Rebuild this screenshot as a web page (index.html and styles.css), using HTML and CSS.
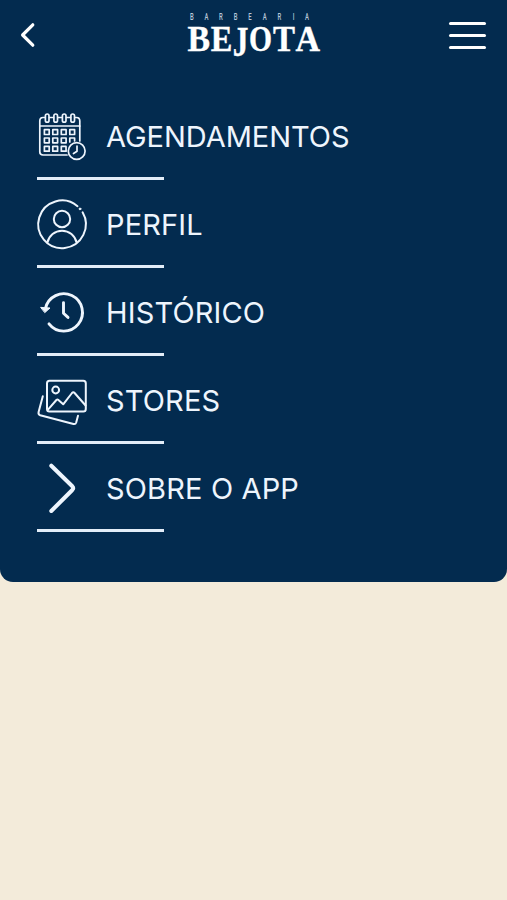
FILE: index.html
```
<!DOCTYPE html>
<html lang="pt-BR">
    <head>
        <meta charset="utf-8">
        <title>Barbearia Bejota</title>
        <link rel="stylesheet" href="styles.css">
    </head>
    <body>
        <div class="panel">
            <header class="topbar">
                <svg class="back" viewBox="0 0 16 26" width="16" height="26">
                    <path d="M12.8 2.8 L2.6 13 L12.8 23.2"/>
                </svg>
                <svg class="logo" viewBox="0 0 136 48" width="136" height="48">
                    <text class="logo-small" transform="scale(0.7 1)" x="7 28 48.5 69.5 90.5 111 132 154 171.5" y="9">BARBEARIA</text>
                    <g class="logo-name">
                        <text x="2.5" y="40" textLength="22.5" lengthAdjust="spacingAndGlyphs">B</text>
                        <text x="25.8" y="40" textLength="21.6" lengthAdjust="spacingAndGlyphs">E</text>
                        <text class="logo-j" x="47.8" y="44.5" textLength="15.6" lengthAdjust="spacingAndGlyphs">J</text>
                        <text x="64" y="40" textLength="23" lengthAdjust="spacingAndGlyphs">O</text>
                        <text x="88" y="40" textLength="22" lengthAdjust="spacingAndGlyphs">T</text>
                        <text x="110.4" y="40" textLength="24.5" lengthAdjust="spacingAndGlyphs">A</text>
                    </g>
                </svg>
                <div class="burger">
                    <span></span>
                    <span></span>
                    <span></span>
                </div>
            </header>
            <nav class="menu">
                <a class="item">
                    <svg class="icon" viewBox="0 0 50 50">
                        <!-- calendar, left open where the clock sits -->
                        <path d="M30 44 H6 Q2.8 44 2.8 41 V10 Q2.8 6.5 6 6.5 H8 M12.5 6.5 H16.5 M21 6.5 H25 M29.5 6.5 H33.5 M38 6.5 H39.5 Q42.8 6.5 42.8 10 V30"/>
                        <path d="M2.8 15 H42.8"/>
                        <rect x="8.4" y="3" width="3.6" height="8.2" rx="1.8"/>
                        <rect x="16.9" y="3" width="3.6" height="8.2" rx="1.8"/>
                        <rect x="25.4" y="3" width="3.6" height="8.2" rx="1.8"/>
                        <rect x="33.9" y="3" width="3.6" height="8.2" rx="1.8"/>
                        <path d="M7.4 18.7h4.8v4.8h-4.8z M15.8 18.7h4.8v4.8h-4.8z M24.3 18.7h4.8v4.8h-4.8z M32.8 18.7h4.8v4.8h-4.8z"/>
                        <path d="M7.4 27h4.8v4.8h-4.8z M15.8 27h4.8v4.8h-4.8z M24.3 27h4.8v4.8h-4.8z M32.8 31v-4h4.8v3"/>
                        <path d="M7.4 35.4h4.8v4.8h-4.8z M15.8 35.4h4.8v4.8h-4.8z M29 35.4h-4.7v4.8h4.8z"/>
                        <circle cx="39.7" cy="40" r="8.4"/>
                        <path d="M40 35 V40.3 L36.5 42.5"/>
                    </svg>
                    <span class="label label-wide">AGENDAMENTOS</span>
                </a>
                <a class="item">
                    <svg class="icon icon-user" viewBox="0 0 50 50">
                        <path d="M40.5 7.2 A23.8 23.8 0 1 0 45.6 13.3"/>
                        <circle cx="25" cy="20" r="8.2"/>
                        <path d="M10.4 43.6 A14.9 14.9 0 0 1 39.6 43.6"/>
                        <circle class="solid" cx="43" cy="9.9" r="0.9"/>
                    </svg>
                    <span class="label">PERFIL</span>
                </a>
                <a class="item">
                    <svg class="icon icon-history" viewBox="0 0 50 50">
                        <path d="M8.5 21.4 A18.7 18.7 0 1 1 12 36.9"/>
                        <path d="M26.5 15.6 V26.2 L31 30.4"/>
                        <path class="solid" d="M4 20.4 L13 21 L8 25.4 Z"/>
                    </svg>
                    <span class="label">HISTÓRICO</span>
                </a>
                <a class="item">
                    <svg class="icon icon-photos" viewBox="0 0 50 50">
                        <rect x="10" y="5.8" width="38.8" height="30.8" rx="2.5"/>
                        <circle cx="18.7" cy="15" r="3.4"/>
                        <path d="M10.8 34.8 L19.4 25 Q20.4 24 21.4 24.9 L26.2 29.3 L35 18 Q36.3 16.5 37.6 18 L48.6 30.5"/>
                        <path d="M5.8 21.3 L1.6 37 Q1 39.5 3.2 40.2 L36.5 49 Q38.6 49.4 39.2 47.5 L41 40.8"/>
                    </svg>
                    <span class="label">STORES</span>
                </a>
                <a class="item">
                    <svg class="icon icon-next" viewBox="0 0 50 50">
                        <path d="M14.3 2.7 L35.3 23.3 Q37 25.2 35.3 27 L14.3 48"/>
                    </svg>
                    <span class="label">SOBRE O APP</span>
                </a>
            </nav>
        </div>
    </body>
</html>
```
FILE: styles.css
```
body {
    margin: 0;
    min-height: 100vh;
    background-color: #f3ebda;
    font-family: Inter, "Liberation Sans", sans-serif;
}
.panel {
    box-sizing: border-box;
    height: 582px;
    background-color: #032b4f;
    border-radius: 0 0 13px 13px;
}
.topbar {
    display: grid;
    grid-template-columns: 1fr 136px 1fr;
    align-items: center;
    height: 70px;
    padding: 0 21px 0 20px;
}
.back {
    fill: none;
    stroke: #fff;
    stroke-width: 3.2;
    stroke-linecap: round;
    stroke-linejoin: round;
}
.logo {
    display: block;
    margin-top: -1px;
    overflow: visible;
    fill: #fff;
}
.logo-small {
    font-family: Roboto, sans-serif;
    font-weight: 500;
    font-size: 8.5px;
    fill: #b9c8d8;
}
.logo-name {
    font-family: "Liberation Serif", serif;
    font-weight: bold;
    font-size: 36px;
    stroke: #fff;
    stroke-width: 0.4;
}
.logo-j {
    font-size: 42px;
}
.burger {
    display: flex;
    flex-direction: column;
    justify-self: end;
    gap: 9px;
    width: 37px;
}
.burger span {
    height: 3px;
    border-radius: 2px;
    background-color: #fff;
}
.menu {
    display: flex;
    flex-direction: column;
    gap: 19px;
    padding: 41px 37px 0;
}
.item {
    display: flex;
    gap: 19px;
    height: 66px;
    padding-bottom: 3px;
    background: linear-gradient(#e3edf8, #e3edf8) left bottom / 127px 3px no-repeat;
}
.icon {
    width: 50px;
    height: 50px;
    overflow: visible;
    fill: none;
    stroke: #eef5fd;
    stroke-width: 1.7;
    stroke-linecap: round;
    stroke-linejoin: round;
}
.icon-user {
    stroke-width: 2;
}
.icon-history {
    stroke-width: 2.9;
}
.icon-photos {
    stroke-width: 2;
}
.icon-next {
    stroke-width: 4;
}
.icon .solid {
    fill: #eef5fd;
    stroke-width: 1;
}
.label {
    line-height: 52px;
    font-size: 29px;
    letter-spacing: 0.15px;
    color: #eef5fd;
    white-space: nowrap;
}
.label-wide {
    letter-spacing: -0.04px;
}
```
